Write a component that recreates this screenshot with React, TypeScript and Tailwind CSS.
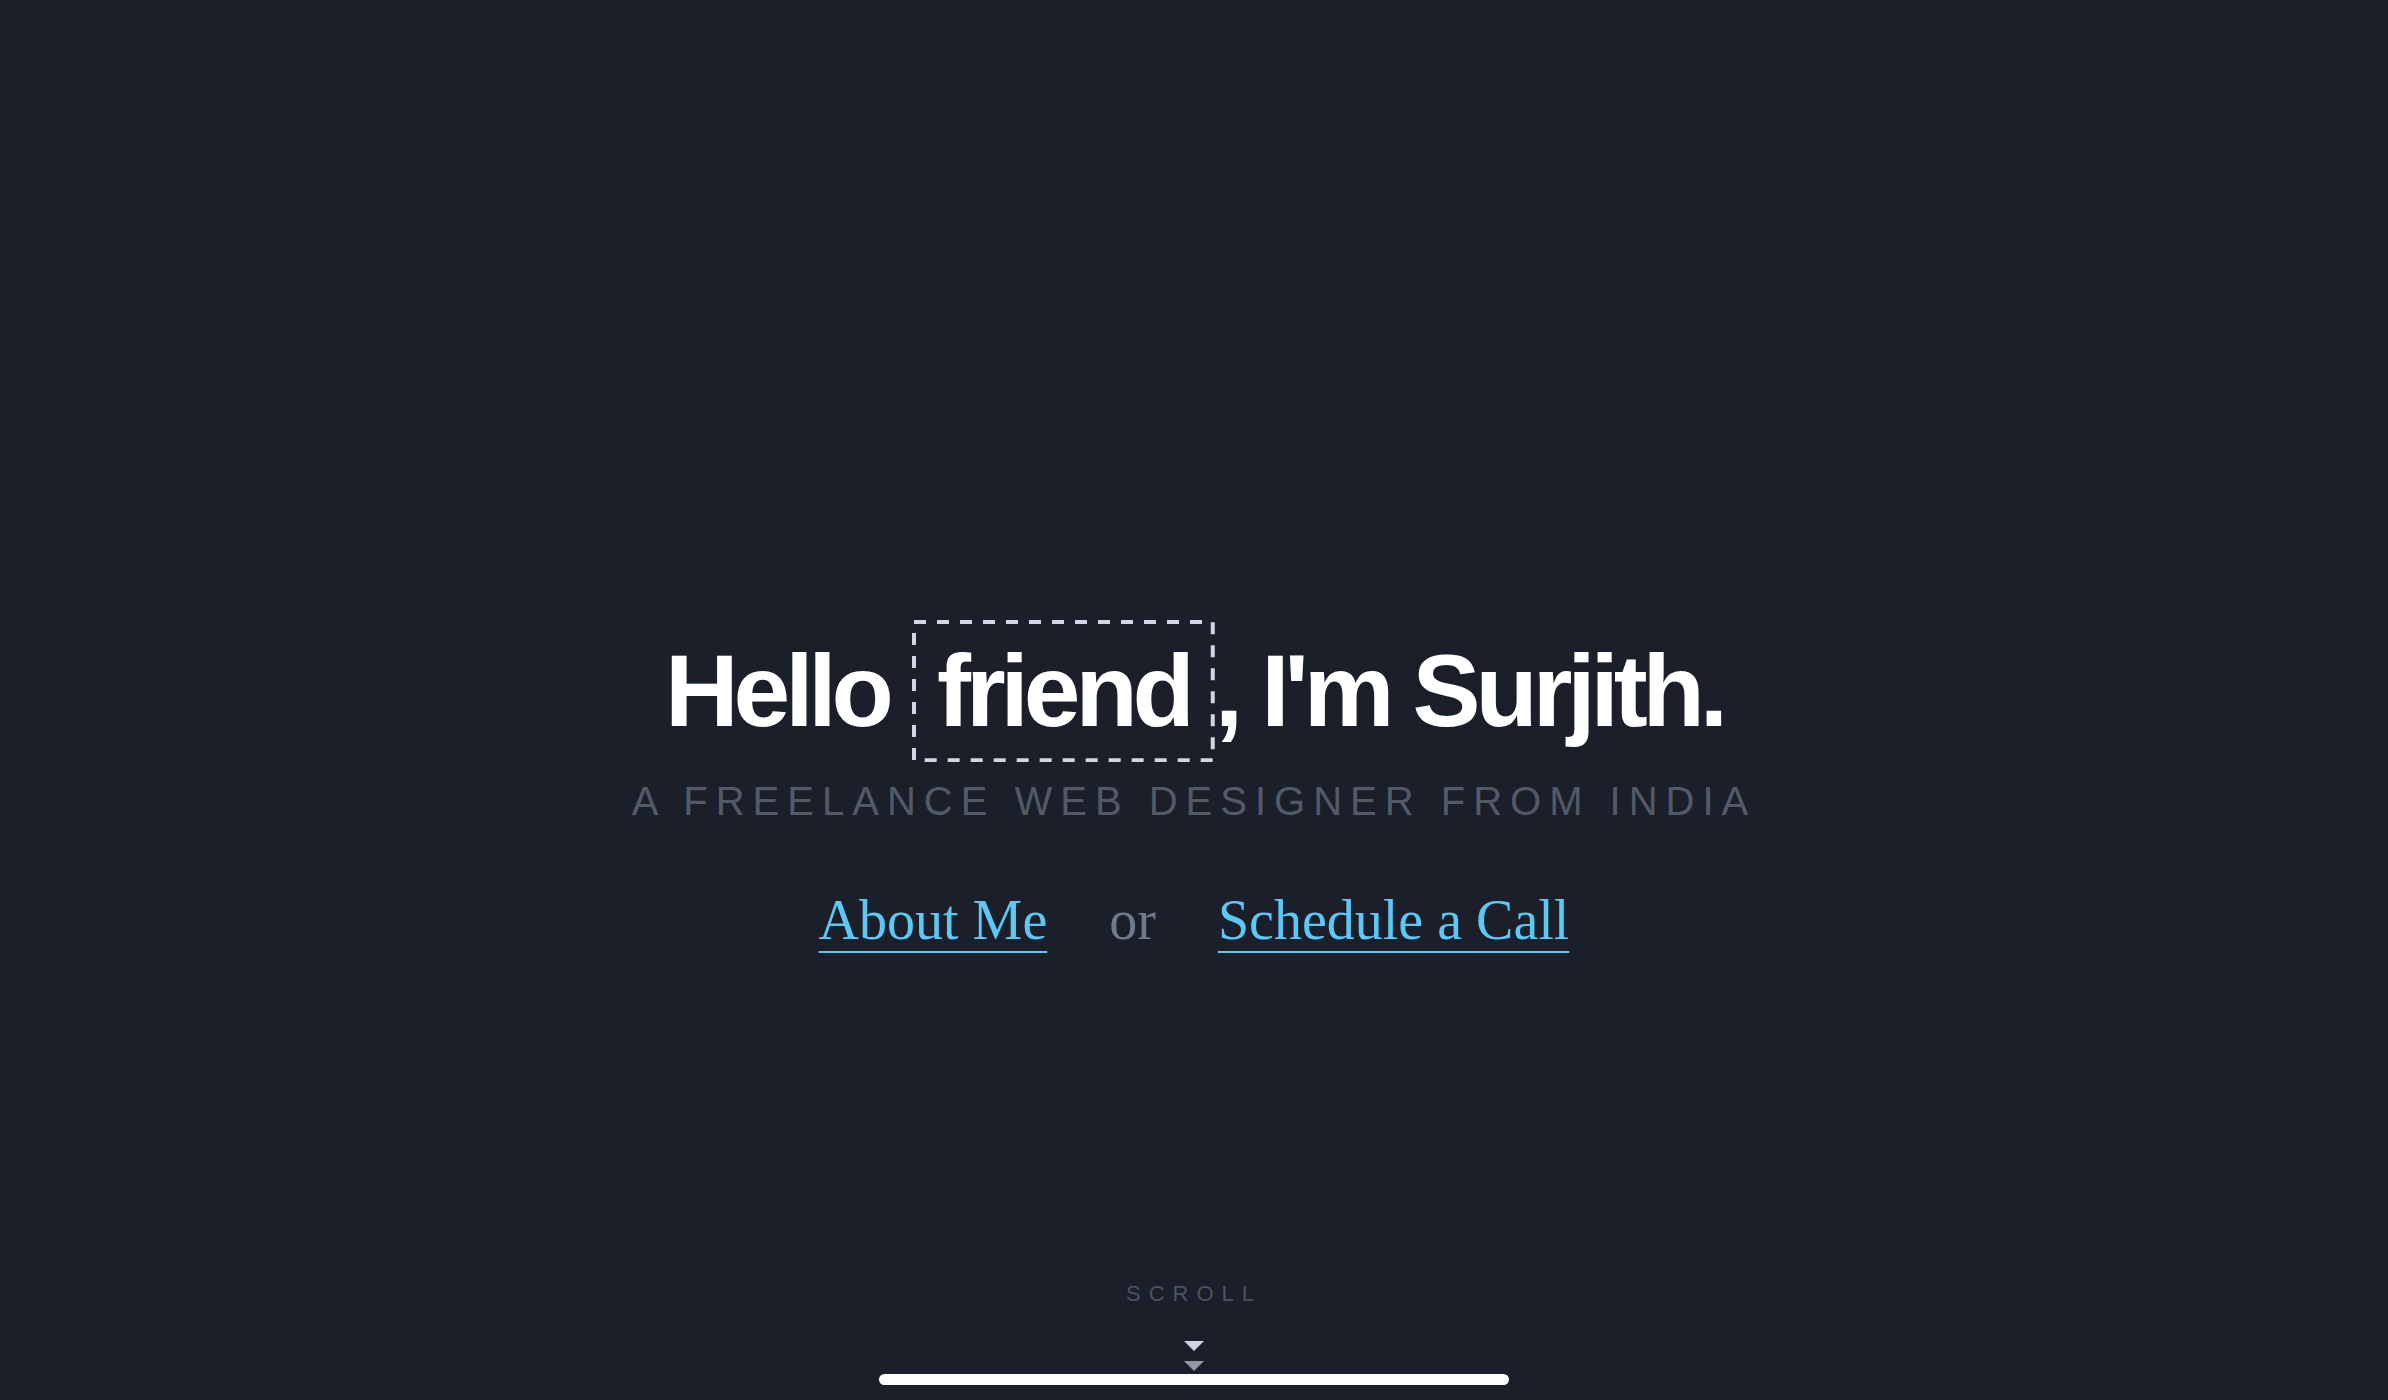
import React from "react";

export default function App() {
  return (
    <div className="relative h-[1400px] w-full overflow-hidden bg-[#1b1f29] flex flex-col items-center pt-[620px]">
      <h1
        className="text-center text-white font-bold text-[102px] leading-[1.1] tracking-[-0.05em] whitespace-nowrap"
        style={{ fontFamily: '"Liberation Sans", Arial, sans-serif' }}
      >
        Hello{" "}
        <span className="relative inline-block border-4 border-transparent px-[21px] py-[11px] leading-[1.1]">
          friend
          <svg className="pointer-events-none absolute -left-1 -top-1 w-[calc(100%+8px)] h-[calc(100%+8px)]">
            <rect
              x="2"
              y="2"
              className="w-[calc(100%-4px)] h-[calc(100%-4px)]"
              fill="none"
              stroke="#d3d5e2"
              strokeWidth="4"
              strokeDasharray="12 11"
            />
          </svg>
        </span>
        , I'm Surjith.
      </h1>

      <p
        className="mt-[15px] text-[40px] leading-[1.2] tracking-[8px] text-[#525a68] uppercase whitespace-nowrap"
        style={{ fontFamily: '"Liberation Sans", Arial, sans-serif' }}
      >
        A Freelance Web Designer From India
      </p>

      <div
        className="mt-[62px] flex items-baseline gap-[62px] text-[56px] leading-[1.2] whitespace-nowrap"
        style={{ fontFamily: '"Liberation Serif", "Times New Roman", serif' }}
      >
        <a
          href="#about"
          className="text-[#5bc8f6] underline decoration-2 underline-offset-[12px]"
        >
          About Me
        </a>
        <span className="text-[#6f7a8c]">or</span>
        <a
          href="#call"
          className="text-[#5bc8f6] underline decoration-2 underline-offset-[12px]"
        >
          Schedule a Call
        </a>
      </div>

      <div className="mt-[327px] flex flex-col items-center">
        <span
          className="text-[22px] leading-[1.2] tracking-[8px] text-[#4b5361]"
          style={{ fontFamily: '"Liberation Sans", Arial, sans-serif' }}
        >
          SCROLL
        </span>
        <svg className="mt-[33px]" width="20" height="10" viewBox="0 0 20 10">
          <polygon points="0,0 20,0 10,10" fill="#cfd6e3" />
        </svg>
        <svg className="mt-[10px]" width="20" height="10" viewBox="0 0 20 10">
          <polygon points="0,0 20,0 10,10" fill="#9298a4" />
        </svg>
      </div>

      <div className="absolute bottom-[15px] left-1/2 -translate-x-1/2 w-[630px] h-[11px] rounded-full bg-white" />
    </div>
  );
}
